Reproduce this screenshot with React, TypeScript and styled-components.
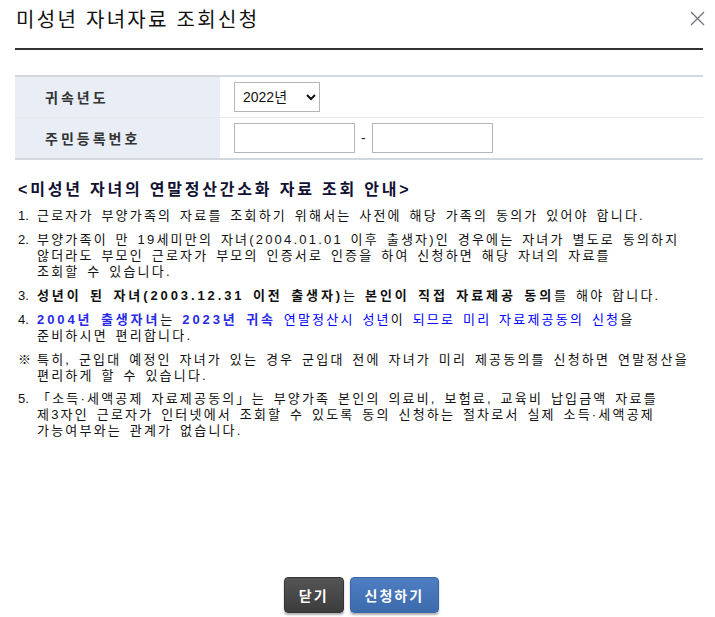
import styled, { createGlobalStyle } from "styled-components";

const GlobalStyle = createGlobalStyle`
  html, body {
    margin: 0;
    padding: 0;
    background: #fff;
  }
  body {
    font-family: "Liberation Sans", "Noto Sans CJK KR", sans-serif;
    color: #222;
  }
`;

const Dialog = styled.div`
  width: 715px;
  height: 617px;
  box-sizing: border-box;
  padding: 0 12px 4px 15px;
  display: flex;
  flex-direction: column;
`;

const Header = styled.div`
  display: flex;
  align-items: center;
  justify-content: space-between;
  height: 50px;
  box-sizing: border-box;
  padding-bottom: 11px;
  border-bottom: 2px solid #333;
`;

const Title = styled.h1`
  margin: 0;
  padding-left: 1px;
  font-size: 20px;
  font-weight: 400;
  color: #111;
  letter-spacing: 2.3px;
`;

const CloseButton = styled.button`
  border: 0;
  background: none;
  padding: 0;
  margin-right: -3px;
  width: 18px;
  height: 18px;
  cursor: pointer;
  display: flex;
  align-items: center;
  justify-content: center;
`;

const FormTable = styled.div`
  margin-top: 25px;
  border-top: 2px solid #d3d7de;
  border-bottom: 2px solid #d3d7de;
`;

const FormRow = styled.div`
  display: grid;
  grid-template-columns: 206px 1fr;
  height: 40px;
  & + & {
    border-top: 1px solid #e6e8ec;
  }
`;

const Label = styled.div`
  background: #e8edf6;
  border-right: 1px solid #fff;
  display: flex;
  align-items: center;
  padding-left: 30px;
  font-size: 14px;
  font-weight: 700;
  color: #333;
  letter-spacing: 3px;
`;

const Value = styled.div`
  display: flex;
  align-items: center;
  gap: 6px;
  padding-left: 13px;
`;

const Select = styled.select`
  width: 86px;
  height: 30px;
  border: 1px solid #b5b5b5;
  border-radius: 0;
  font-family: "Liberation Sans", "Noto Sans CJK KR", sans-serif;
  font-size: 14px;
  color: #111;
  background: #fff;
  padding: 0 4px;
`;

const TextInput = styled.input`
  width: 121px;
  height: 30px;
  box-sizing: border-box;
  border: 1px solid #b5b5b5;
  border-radius: 0;
`;

const Dash = styled.span`
  font-size: 14px;
  color: #333;
`;

const Notice = styled.div`
  margin-top: 16px;
  padding-left: 3px;
`;

const NoticeTitle = styled.h2`
  margin: 0 0 8px;
  font-size: 16px;
  font-weight: 700;
  color: #111133;
  letter-spacing: 2.8px;
`;

const List = styled.ol`
  margin: 0;
  padding: 0;
  list-style: none;
`;

const Item = styled.li`
  display: flex;
  font-size: 13px;
  line-height: 16px;
  color: #111;
  letter-spacing: 2.2px;
  word-spacing: 2px;
  white-space: nowrap;
  & + & {
    margin-top: 8px;
  }
  & + & + & + & + & + & {
    margin-top: 7px;
  }
`;

const Marker = styled.span`
  flex: 0 0 19px;
  letter-spacing: 0;
`;

const Text = styled.span``;

const Strong = styled.b<{ $blue?: boolean }>`
  font-weight: 700;
  letter-spacing: 2.9px;
  color: ${(p) => (p.$blue ? "#2a2ae6" : "#111")};
`;

const Blue = styled.span`
  color: #0000ff;
`;

const Footer = styled.div`
  margin-top: auto;
  display: flex;
  justify-content: center;
  gap: 6px;
  padding-left: 5px;
`;

const Button = styled.button<{ $primary?: boolean }>`
  height: 36px;
  padding: 0 14px;
  border: 1px solid ${(p) => (p.$primary ? "#3a66a8" : "#333")};
  border-radius: 4px;
  background: ${(p) =>
    p.$primary
      ? "linear-gradient(#4f7fc2, #3b6aad)"
      : "linear-gradient(#555, #3c3c3c)"};
  box-shadow: 0 2px 2px rgba(0, 0, 0, 0.3);
  color: #fff;
  font-family: "Noto Sans CJK KR", sans-serif;
  font-size: 14px;
  font-weight: 700;
  letter-spacing: 2px;
  cursor: pointer;
`;

export default function App() {
  return (
    <Dialog>
      <GlobalStyle />
      <Header>
        <Title>미성년 자녀자료 조회신청</Title>
        <CloseButton aria-label="닫기">
          <svg width="15" height="15" viewBox="0 0 15 15">
            <path d="M1 1 L14 14 M14 1 L1 14" stroke="#6f7380" strokeWidth="1.3" fill="none" />
          </svg>
        </CloseButton>
      </Header>

      <FormTable>
        <FormRow>
          <Label>귀속년도</Label>
          <Value>
            <Select defaultValue="2022">
              <option value="2022">2022년</option>
              <option value="2021">2021년</option>
            </Select>
          </Value>
        </FormRow>
        <FormRow>
          <Label>주민등록번호</Label>
          <Value>
            <TextInput />
            <Dash>-</Dash>
            <TextInput />
          </Value>
        </FormRow>
      </FormTable>

      <Notice>
        <NoticeTitle>&lt;미성년 자녀의 연말정산간소화 자료 조회 안내&gt;</NoticeTitle>
        <List>
          <Item>
            <Marker>1.</Marker>
            <Text>근로자가 부양가족의 자료를 조회하기 위해서는 사전에 해당 가족의 동의가 있어야 합니다.</Text>
          </Item>
          <Item>
            <Marker>2.</Marker>
            <Text>
              부양가족이 만 19세미만의 자녀(2004.01.01 이후 출생자)인 경우에는 자녀가 별도로 동의하지
              <br />
              않더라도 부모인 근로자가 부모의 인증서로 인증을 하여 신청하면 해당 자녀의 자료를
              <br />
              조회할 수 있습니다.
            </Text>
          </Item>
          <Item>
            <Marker>3.</Marker>
            <Text>
              <Strong>성년이 된 자녀(2003.12.31 이전 출생자)</Strong>는 <Strong>본인이 직접 자료제공 동의</Strong>를 해야 합니다.
            </Text>
          </Item>
          <Item>
            <Marker>4.</Marker>
            <Text>
              <Strong $blue>2004년 출생자녀</Strong>는 <Strong $blue>2023년 귀속</Strong> <Blue>연말정산시 성년</Blue>이{" "}
              <Blue>되므로 미리 자료제공동의 신청</Blue>을
              <br />
              준비하시면 편리합니다.
            </Text>
          </Item>
          <Item>
            <Marker>※</Marker>
            <Text>
              특히, 군입대 예정인 자녀가 있는 경우 군입대 전에 자녀가 미리 제공동의를 신청하면 연말정산을
              <br />
              편리하게 할 수 있습니다.
            </Text>
          </Item>
          <Item>
            <Marker>5.</Marker>
            <Text>
              「소득·세액공제 자료제공동의」는 부양가족 본인의 의료비, 보험료, 교육비 납입금액 자료를
              <br />
              제3자인 근로자가 인터넷에서 조회할 수 있도록 동의 신청하는 절차로서 실제 소득·세액공제
              <br />
              가능여부와는 관계가 없습니다.
            </Text>
          </Item>
        </List>
      </Notice>

      <Footer>
        <Button>닫기</Button>
        <Button $primary>신청하기</Button>
      </Footer>
    </Dialog>
  );
}
